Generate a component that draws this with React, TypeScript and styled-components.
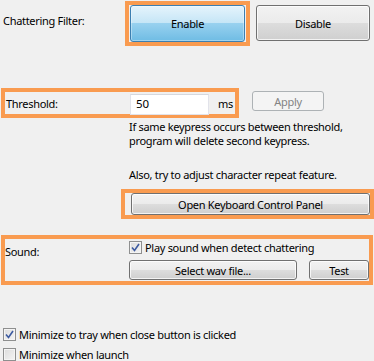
import React from "react";
import styled, { createGlobalStyle, css } from "styled-components";

const GlobalStyle = createGlobalStyle`
  html, body { margin: 0; padding: 0; background: #f0f0f0; }
  body {
    font-family: "Noto Sans", "Liberation Sans", sans-serif;
    font-size: 11px;
    letter-spacing: -0.3px;
    color: #000;
  }
`;

const ORANGE = "#f99b50";

const Page = styled.div`
  width: 374px;
  height: 361px;
  display: flex;
  flex-direction: column;
  overflow: hidden;
`;

const Highlight = styled.div<{ $pad?: string }>`
  border: 4px solid ${ORANGE};
  padding: ${(p) => p.$pad ?? "0"};
  box-sizing: border-box;
`;

const Label = styled.div<{ $top?: number }>`
  width: 126px;
  flex: none;
  padding-left: 3px;
  padding-top: ${(p) => p.$top ?? 0}px;
  box-sizing: border-box;
  line-height: 14px;
  white-space: nowrap;
`;

/* Row 1: Chattering filter */
const FilterRow = styled.div`
  display: flex;
  align-items: flex-start;
  margin-top: 1px;
  height: 45px;
`;

const FilterButtons = styled.div`
  display: flex;
  align-items: flex-start;
  gap: 6px;
`;

const buttonBase = css`
  font-family: inherit;
  font-size: 11px;
  letter-spacing: -0.3px;
  color: #000;
  border-radius: 3px;
  box-sizing: border-box;
  padding: 0;
  display: flex;
  align-items: center;
  justify-content: center;
  cursor: default;
`;

const PushButton = styled.button<{ $w: number; $h: number; $pressed?: boolean; $disabled?: boolean }>`
  ${buttonBase};
  width: ${(p) => p.$w}px;
  height: ${(p) => p.$h}px;
  border: 1px solid #707070;
  background: linear-gradient(#f2f2f2 0%, #ebebeb 50%, #dddddd 50%, #cfcfcf 100%);
  box-shadow: inset 0 0 0 1px rgba(255, 255, 255, 0.75);
  ${(p) =>
    p.$pressed &&
    css`
      border-color: #3c7fb1;
      background: linear-gradient(#e5f4fc 0%, #c4e5f6 50%, #98d1ef 50%, #6fbce4 100%);
      box-shadow: inset 0 0 0 1px rgba(255, 255, 255, 0.35);
    `}
  ${(p) =>
    p.$disabled &&
    css`
      border-color: #adb2b5;
      background: #f4f4f4;
      box-shadow: none;
      color: #838383;
    `}
`;

const EnableFrame = styled(Highlight)`
  padding: 0 1px 0 1px;
  margin-left: -1px;
`;

const DisableSlot = styled.div`
  margin-top: 4px;
`;

/* Threshold */
const ThresholdWrap = styled.div`
  margin-top: 42px;
  display: flex;
  align-items: flex-start;
`;

const ThresholdBox = styled(Highlight)`
  margin-left: 1px;
  width: 238px;
  height: 30px;
  display: flex;
  align-items: center;
`;

const ThresholdLabel = styled(Label)`
  width: 125px;
  padding-left: 1px;
  padding-top: 1px;
`;

const NumberInput = styled.div`
  width: 79px;
  height: 21px;
  box-sizing: border-box;
  background: #fff;
  border: 1px solid #e2e3ea;
  border-top-color: #d6d8de;
  margin-top: 2px;
  padding: 2px 0 0 5px;
  line-height: 14px;
  font-size: 11.5px;
  letter-spacing: -0.2px;
`;

const Unit = styled.span`
  margin-left: 9px;
  margin-top: 1px;
`;

const ApplySlot = styled.div`
  margin-left: 13px;
  margin-top: 3px;
`;

/* help text */
const Help = styled.div`
  margin-left: 129px;
  margin-top: 2px;
  line-height: 14px;
  white-space: nowrap;
`;

const HelpPara = styled.p<{ $top?: number }>`
  margin: ${(p) => p.$top ?? 0}px 0 0 0;
`;

const KeyboardFrame = styled(Highlight)`
  margin: 7px 0 0 121px;
  width: 253px;
  border-right-width: 4px;
  padding: 0 0 0 6px;
  height: 31px;
  display: flex;
  align-items: center;
`;

/* Sound */
const SoundBox = styled(Highlight)`
  margin: 16px 0 0 1px;
  width: 372px;
  height: 52px;
  display: flex;
  align-items: flex-start;
`;

const SoundLabel = styled(Label)`
  width: 124px;
  padding-left: 0;
  padding-top: 6px;
`;

const SoundControls = styled.div`
  display: flex;
  flex-direction: column;
  gap: 6px;
  padding-top: 2px;
`;

const ButtonRow = styled.div`
  display: flex;
  gap: 12px;
`;

const CheckRow = styled.label<{ $left?: number }>`
  display: flex;
  align-items: center;
  gap: 3px;
  height: 13px;
  white-space: nowrap;
  margin-left: ${(p) => p.$left ?? 0}px;
  line-height: 14px;
`;

const Box = styled.span`
  width: 13px;
  height: 13px;
  box-sizing: border-box;
  border: 1px solid #8e8f8f;
  background: linear-gradient(135deg, #dcdcdc 0%, #f4f4f4 100%);
  box-shadow: inset 0 0 0 1px #f4f4f4;
  display: flex;
  align-items: center;
  justify-content: center;
  flex: none;
`;

const Options = styled.div`
  margin-top: 43px;
  display: flex;
  flex-direction: column;
  gap: 7px;
`;

function CheckBox({ checked }: { checked?: boolean }) {
  return (
    <Box>
      {checked && (
        <svg width="9" height="9" viewBox="0 0 9 9">
          <path d="M1 4.5 L3.5 7.5 L8 1" fill="none" stroke="#3c5aa0" strokeWidth="1.6" />
        </svg>
      )}
    </Box>
  );
}

export default function App() {
  return (
    <>
      <GlobalStyle />
      <Page>
        <FilterRow>
          <Label $top={13}>Chattering Filter:</Label>
          <FilterButtons>
            <EnableFrame>
              <PushButton $w={115} $h={37} $pressed>
                Enable
              </PushButton>
            </EnableFrame>
            <DisableSlot>
              <PushButton $w={114} $h={36}>Disable</PushButton>
            </DisableSlot>
          </FilterButtons>
        </FilterRow>

        <ThresholdWrap>
          <ThresholdBox>
            <ThresholdLabel>Threshold:</ThresholdLabel>
            <NumberInput>50</NumberInput>
            <Unit>ms</Unit>
          </ThresholdBox>
          <ApplySlot>
            <PushButton $w={72} $h={20} $disabled>
              Apply
            </PushButton>
          </ApplySlot>
        </ThresholdWrap>

        <Help>
          <HelpPara>
            If same keypress occurs between threshold,
            <br />
            program will delete second keypress.
          </HelpPara>
          <HelpPara $top={20}>Also, try to adjust character repeat feature.</HelpPara>
        </Help>

        <KeyboardFrame>
          <PushButton $w={239} $h={22}>Open Keyboard Control Panel</PushButton>
        </KeyboardFrame>

        <SoundBox>
          <SoundLabel>Sound:</SoundLabel>
          <SoundControls>
            <CheckRow>
              <CheckBox checked />
              Play sound when detect chattering
            </CheckRow>
            <ButtonRow>
              <PushButton $w={168} $h={20}>Select wav file...</PushButton>
              <PushButton $w={60} $h={20}>Test</PushButton>
            </ButtonRow>
          </SoundControls>
        </SoundBox>

        <Options>
          <CheckRow $left={3}>
            <CheckBox checked />
            Minimize to tray when close button is clicked
          </CheckRow>
          <CheckRow $left={3}>
            <CheckBox />
            Minimize when launch
          </CheckRow>
        </Options>
      </Page>
    </>
  );
}
